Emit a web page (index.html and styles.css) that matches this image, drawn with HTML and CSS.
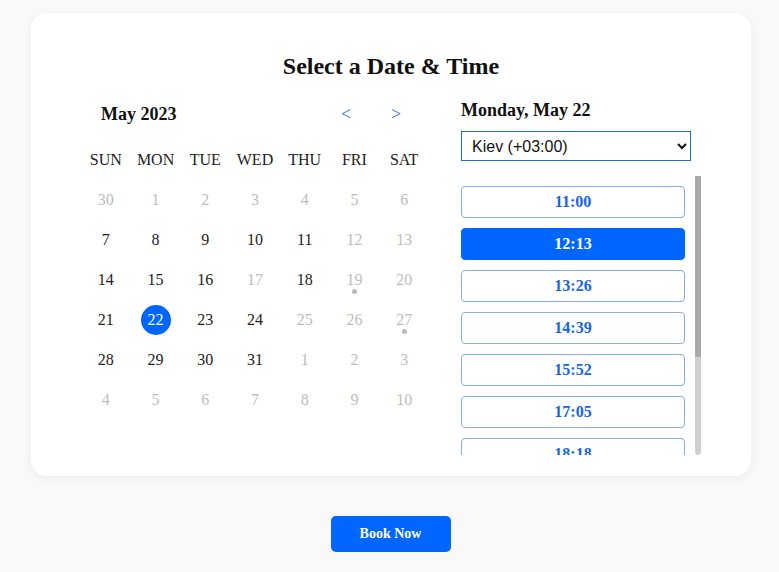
FILE: index.html
```html
<!DOCTYPE html>
<html lang="en">
<head>
<meta charset="utf-8">
<title>Select a Date &amp; Time</title>
<link rel="stylesheet" href="styles.css">
</head>
<body>
<div class="card">
  <h2 class="title">Select a Date &amp; Time</h2>
  <div class="columns">
    <div class="calendar">
      <div class="cal-header">
        <span class="month">May 2023</span>
        <div class="nav">
          <button class="nav-btn">&lt;</button>
          <button class="nav-btn">&gt;</button>
        </div>
      </div>
      <div class="grid">
        <div class="wd">SUN</div><div class="wd">MON</div><div class="wd">TUE</div><div class="wd">WED</div><div class="wd">THU</div><div class="wd">FRI</div><div class="wd">SAT</div>
        <div class="day off">30</div><div class="day off">1</div><div class="day off">2</div><div class="day off">3</div><div class="day off">4</div><div class="day off">5</div><div class="day off">6</div>
        <div class="day">7</div><div class="day">8</div><div class="day">9</div><div class="day">10</div><div class="day">11</div><div class="day off">12</div><div class="day off">13</div>
        <div class="day">14</div><div class="day">15</div><div class="day">16</div><div class="day off">17</div><div class="day">18</div><div class="day off dot">19</div><div class="day off">20</div>
        <div class="day">21</div><div class="day"><span class="sel">22</span></div><div class="day">23</div><div class="day">24</div><div class="day off">25</div><div class="day off">26</div><div class="day off dot">27</div>
        <div class="day">28</div><div class="day">29</div><div class="day">30</div><div class="day">31</div><div class="day off">1</div><div class="day off">2</div><div class="day off">3</div>
        <div class="day off">4</div><div class="day off">5</div><div class="day off">6</div><div class="day off">7</div><div class="day off">8</div><div class="day off">9</div><div class="day off">10</div>
      </div>
    </div>
    <div class="times">
      <h3 class="date-title">Monday, May 22</h3>
      <select class="tz">
        <option>Kiev (+03:00)</option>
      </select>
      <div class="slot-wrap">
        <div class="slots">
          <button class="slot">11:00</button>
          <button class="slot active">12:13</button>
          <button class="slot">13:26</button>
          <button class="slot">14:39</button>
          <button class="slot">15:52</button>
          <button class="slot">17:05</button>
          <button class="slot">18:18</button>
          <button class="slot">19:31</button>
          <button class="slot">20:44</button>
          <button class="slot">21:57</button>
        </div>
        <div class="scrollbar"><div class="thumb"></div></div>
      </div>
    </div>
  </div>
</div>
<div class="footer">
  <button class="book">Book Now</button>
</div>
</body>
</html>
```
FILE: styles.css
```css
html, body {
  margin: 0;
  padding: 0;
  background: #f9f9f9;
  font-family: "Liberation Serif", "Times New Roman", serif;
  color: #111;
}
body {
  padding-top: 13px;
}
.card {
  width: 620px;
  margin-left: 31px;
  background: #fff;
  border-radius: 16px;
  box-shadow: 0 2px 10px rgba(0, 0, 0, 0.06);
  padding: 39px 50px 21px;
}
.title {
  margin: 0 0 9px;
  height: 28px;
  line-height: 28px;
  font-size: 24px;
  font-weight: bold;
  text-align: center;
}
.columns {
  display: grid;
  grid-template-columns: 348px 240px;
  column-gap: 32px;
  align-items: start;
}
.cal-header {
  height: 50px;
  display: flex;
  align-items: center;
  justify-content: space-between;
  padding: 0 8px 0 20px;
}
.month {
  font-size: 18px;
  font-weight: bold;
}
.nav {
  display: flex;
}
.nav-btn {
  width: 50px;
  background: none;
  border: none;
  padding: 0;
  font-family: "Liberation Serif", serif;
  font-size: 18px;
  color: #3a6fd0;
  cursor: pointer;
}
.grid {
  display: grid;
  grid-template-columns: repeat(7, 1fr);
  grid-auto-rows: 40px;
  margin-top: 1px;
}
.wd, .day {
  display: flex;
  align-items: center;
  justify-content: center;
  font-size: 16px;
  position: relative;
}
.wd {
  color: #222;
}
.day {
  color: #222;
}
.day.off {
  color: #bdbdbd;
}
.day.dot::after {
  content: "";
  position: absolute;
  left: 50%;
  top: 29px;
  width: 5px;
  height: 5px;
  margin-left: -2.5px;
  border-radius: 50%;
  background: #bbb;
}
.sel {
  width: 30px;
  height: 30px;
  border-radius: 50%;
  background: #0066ff;
  color: #fff;
  display: flex;
  align-items: center;
  justify-content: center;
}
.times {
  padding-top: 11px;
}
.date-title {
  margin: 0;
  height: 21px;
  line-height: 21px;
  font-size: 18px;
  font-weight: bold;
}
.tz {
  display: block;
  margin-top: 10px;
  width: 230px;
  height: 30px;
  border: 1px solid #1f6fd6;
  border-radius: 0;
  background: #fff;
  font-family: "Liberation Sans", Arial, sans-serif;
  font-size: 16px;
  color: #111;
  padding: 0 6px;
}
.slot-wrap {
  position: relative;
  margin-top: 15px;
  height: 279px;
}
.slots {
  height: 100%;
  overflow: hidden;
  padding: 10px 16px 0 0;
  box-sizing: border-box;
}
.scrollbar {
  position: absolute;
  top: 0;
  right: 0;
  width: 6px;
  height: 100%;
  background: #cfcfcf;
  border-radius: 0 0 3px 3px;
}
.thumb {
  height: 181px;
  background: #a9a9a9;
}
.slot {
  display: block;
  width: 224px;
  height: 32px;
  margin: 0 0 10px;
  background: #fff;
  border: 1px solid #86aee8;
  border-radius: 4px;
  font-family: "Liberation Serif", serif;
  font-size: 16px;
  font-weight: bold;
  color: #1565e6;
  cursor: pointer;
}
.slot.active {
  background: #0066ff;
  border-color: #0066ff;
  color: #fff;
}
.footer {
  display: flex;
  justify-content: center;
  padding-left: 2px;
  margin-top: 40px;
}
.book {
  width: 120px;
  height: 36px;
  border: none;
  border-radius: 5px;
  background: #0066ff;
  color: #fff;
  font-family: "Liberation Serif", serif;
  font-size: 14px;
  font-weight: bold;
  cursor: pointer;
}
```
